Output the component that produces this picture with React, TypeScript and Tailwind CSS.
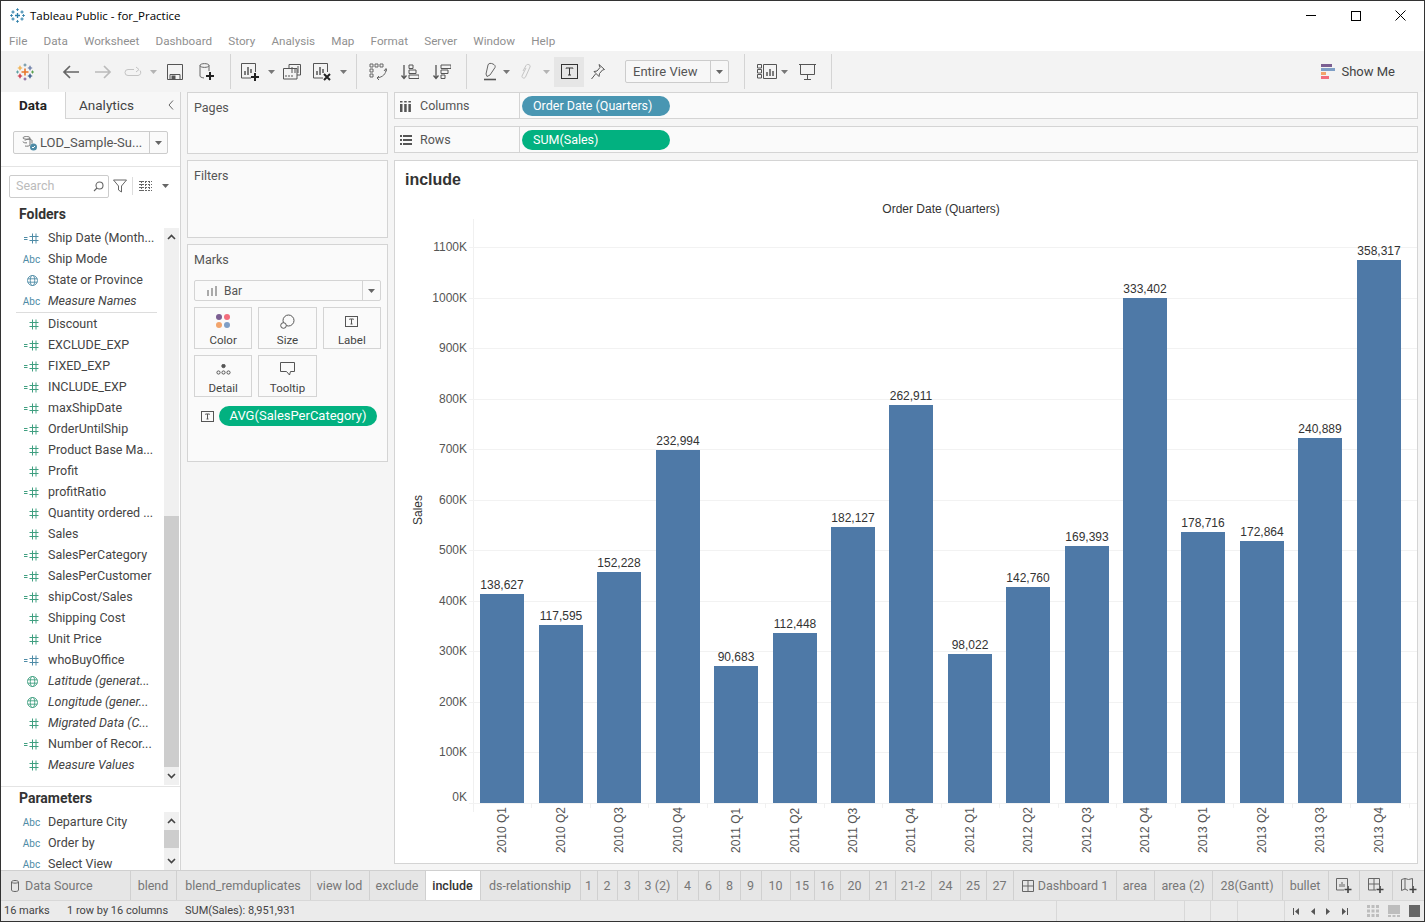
const BLUE = "#4e8ba6";
const GREEN = "#3f9f80";

type FieldKind = "calc" | "num" | "abc" | "globe";
interface Field {
  name: string;
  kind: FieldKind;
  color?: string;
  italic?: boolean;
}

const fieldsTop: Field[] = [
  { name: "Ship Date (Month...", kind: "calc", color: BLUE },
  { name: "Ship Mode", kind: "abc" },
  { name: "State or Province", kind: "globe", color: BLUE },
  { name: "Measure Names", kind: "abc", italic: true },
];

const fieldsBottom: Field[] = [
  { name: "Discount", kind: "num" },
  { name: "EXCLUDE_EXP", kind: "calc" },
  { name: "FIXED_EXP", kind: "calc" },
  { name: "INCLUDE_EXP", kind: "calc" },
  { name: "maxShipDate", kind: "calc" },
  { name: "OrderUntilShip", kind: "calc" },
  { name: "Product Base Ma...", kind: "num" },
  { name: "Profit", kind: "num" },
  { name: "profitRatio", kind: "calc" },
  { name: "Quantity ordered ...", kind: "num" },
  { name: "Sales", kind: "num" },
  { name: "SalesPerCategory", kind: "calc" },
  { name: "SalesPerCustomer", kind: "calc" },
  { name: "shipCost/Sales", kind: "calc" },
  { name: "Shipping Cost", kind: "num" },
  { name: "Unit Price", kind: "num" },
  { name: "whoBuyOffice", kind: "calc", color: BLUE },
  { name: "Latitude (generat...", kind: "globe", italic: true },
  { name: "Longitude (gener...", kind: "globe", italic: true },
  { name: "Migrated Data (C...", kind: "num", italic: true },
  { name: "Number of Recor...", kind: "calc" },
  { name: "Measure Values", kind: "num", italic: true },
];

const params: Field[] = [
  { name: "Departure City", kind: "abc" },
  { name: "Order by", kind: "abc" },
  { name: "Select View", kind: "abc" },
];

const bars = [
  { q: "2010 Q1", v: "138,627", x: 480, top: 594 },
  { q: "2010 Q2", v: "117,595", x: 539, top: 625 },
  { q: "2010 Q3", v: "152,228", x: 597, top: 572 },
  { q: "2010 Q4", v: "232,994", x: 656, top: 450 },
  { q: "2011 Q1", v: "90,683", x: 714, top: 666 },
  { q: "2011 Q2", v: "112,448", x: 773, top: 633 },
  { q: "2011 Q3", v: "182,127", x: 831, top: 527 },
  { q: "2011 Q4", v: "262,911", x: 889, top: 405 },
  { q: "2012 Q1", v: "98,022", x: 948, top: 654 },
  { q: "2012 Q2", v: "142,760", x: 1006, top: 587 },
  { q: "2012 Q3", v: "169,393", x: 1065, top: 546 },
  { q: "2012 Q4", v: "333,402", x: 1123, top: 298 },
  { q: "2013 Q1", v: "178,716", x: 1181, top: 532 },
  { q: "2013 Q2", v: "172,864", x: 1240, top: 541 },
  { q: "2013 Q3", v: "240,889", x: 1298, top: 438 },
  { q: "2013 Q4", v: "358,317", x: 1357, top: 260 },
];

const menus = ["File", "Data", "Worksheet", "Dashboard", "Story", "Analysis", "Map", "Format", "Server", "Window", "Help"];

const tabs = [
  { label: "blend", w: "w-[46px]" },
  { label: "blend_remduplicates", w: "w-[134px]" },
  { label: "view lod", w: "w-[59px]" },
  { label: "exclude", w: "w-[56px]" },
  { label: "include", w: "w-[55px]", active: true },
  { label: "ds-relationship", w: "w-[100px]" },
  { label: "1", w: "w-[17px]" },
  { label: "2", w: "w-[20px]" },
  { label: "3", w: "w-[21px]" },
  { label: "3 (2)", w: "w-[39px]" },
  { label: "4", w: "w-[21px]" },
  { label: "6", w: "w-[21px]" },
  { label: "8", w: "w-[21px]" },
  { label: "9", w: "w-[21px]" },
  { label: "10", w: "w-[29px]" },
  { label: "15", w: "w-[24px]" },
  { label: "16", w: "w-[26px]" },
  { label: "20", w: "w-[29px]" },
  { label: "21", w: "w-[26px]" },
  { label: "21-2", w: "w-[36px]" },
  { label: "24", w: "w-[29px]" },
  { label: "25", w: "w-[26px]" },
  { label: "27", w: "w-[27px]" },
];

const tabsAfter = [
  { label: "area", w: "w-[38px]" },
  { label: "area (2)", w: "w-[58px]" },
  { label: "28(Gantt)", w: "w-[70px]" },
  { label: "bullet", w: "w-[46px]" },
];

function Caret({ className = "" }: { className?: string }) {
  return (
    <div className={"w-[10px] flex justify-center shrink-0 " + className}>
      <svg width="7" height="4" viewBox="0 0 7 4">
        <path d="M0 0h7L3.5 4z" fill="#777" />
      </svg>
    </div>
  );
}

function Slot({ className = "", children }: { className?: string; children: React.ReactNode }) {
  return <div className={"w-[20px] h-[24px] shrink-0 flex items-center justify-center " + className}>{children}</div>;
}

function Sep({ className = "" }: { className?: string }) {
  return <div className={"w-px h-[35px] bg-[#d4d4d4] shrink-0 " + className} />;
}

function Cross({ x, y, r, c, w = 1.5 }: { x: number; y: number; r: number; c: string; w?: number }) {
  return <path d={`M${x - r} ${y}h${2 * r}M${x} ${y - r}v${2 * r}`} stroke={c} strokeWidth={w} fill="none" />;
}

function TableauLogo() {
  return (
    <svg width="18" height="18" viewBox="0 0 18 18">
      <Cross x={9} y={9} r={3.5} c="#e8762b" w={1.6} />
      <Cross x={4} y={5} r={2.2} c="#f0a93a" w={1.2} />
      <Cross x={14} y={5} r={2.2} c="#5b6f9e" w={1.2} />
      <Cross x={4} y={13} r={2.2} c="#c72035" w={1.2} />
      <Cross x={14} y={13} r={2.2} c="#1f457e" w={1.2} />
      <Cross x={9} y={2} r={1.5} c="#5b879b" w={1} />
      <Cross x={9} y={16} r={1.5} c="#7a4f8f" w={1} />
      <Cross x={1.5} y={9} r={1.5} c="#5fa2a5" w={1} />
      <Cross x={16.5} y={9} r={1.5} c="#59a14f" w={1} />
    </svg>
  );
}

function AppIcon() {
  return (
    <svg width="15" height="15" viewBox="0 0 15 15">
      <Cross x={7.5} y={7.5} r={2.5} c="#2d7ea8" w={1.3} />
      <Cross x={3} y={4} r={1.6} c="#2d7ea8" w={1} />
      <Cross x={12} y={4} r={1.6} c="#2d7ea8" w={1} />
      <Cross x={3} y={11} r={1.6} c="#2d7ea8" w={1} />
      <Cross x={12} y={11} r={1.6} c="#2d7ea8" w={1} />
      <Cross x={7.5} y={1.6} r={1.3} c="#2d7ea8" w={1} />
      <Cross x={7.5} y={13.4} r={1.3} c="#2d7ea8" w={1} />
      <Cross x={1.5} y={7.5} r={1.3} c="#2d7ea8" w={1} />
      <Cross x={13.5} y={7.5} r={1.3} c="#2d7ea8" w={1} />
    </svg>
  );
}

function ChartAdd() {
  return (
    <svg width="20" height="20" viewBox="0 0 20 20" fill="none">
      <path d="M11 16H1.5V1.5h14V10" stroke="#555" />
      <path d="M5 13V9M8 13V5M11 11V7" stroke="#555" strokeWidth="1.5" />
      <path d="M15 11v8M11 15h8" stroke="#222" strokeWidth="2" />
    </svg>
  );
}

function FieldIcon({ field }: { field: Field }) {
  if (field.kind === "abc") {
    return <span className="text-[10px] leading-none text-[#4e8ba6] font-['Roboto',sans-serif]">Abc</span>;
  }
  if (field.kind === "globe") {
    const c = field.color ?? GREEN;
    return (
      <svg width="11" height="11" viewBox="0 0 11 11" fill="none" stroke={c} strokeWidth="0.9" className="ml-[4px] mr-[2px]">
        <circle cx="5.5" cy="5.5" r="5" />
        <ellipse cx="5.5" cy="5.5" rx="2.2" ry="5" />
        <path d="M0.8 3.8h9.4M0.8 7.2h9.4" />
      </svg>
    );
  }
  const c = field.color ?? GREEN;
  return (
    <svg width="16" height="11" viewBox="0 0 16 11" fill="none" stroke={c} strokeWidth="1">
      {field.kind === "calc" && <path d="M0 4.5h3.5M0 6.5h3.5" />}
      <path d="M8.5 0.5v10M12 0.5v10M5.5 3.5h9M5.5 7.5h9" />
    </svg>
  );
}

function FieldRow({ field }: { field: Field }) {
  return (
    <div className="h-[21px] flex items-center shrink-0">
      <div className="w-[47px] pl-[20px] pr-[6px] flex items-center justify-center shrink-0">
        <FieldIcon field={field} />
      </div>
      <span className={"whitespace-nowrap text-[#444] " + (field.italic ? "italic" : "")}>{field.name}</span>
    </div>
  );
}

function ScrollArrow({ up }: { up?: boolean }) {
  return (
    <div className="h-[18px] flex items-center justify-center shrink-0">
      <svg width="9" height="6" viewBox="0 0 9 6" fill="none" stroke="#444" strokeWidth="1.6">
        <path d={up ? "M1 5l3.5-3.5L8 5" : "M1 1l3.5 3.5L8 1"} />
      </svg>
    </div>
  );
}

function MarkButton({ label, children }: { label: string; children: React.ReactNode }) {
  return (
    <div className="h-[42px] border border-[#d4d4d4] flex flex-col items-center justify-end">
      <div className="h-[22px] flex items-center">{children}</div>
      <span className="leading-[16px] text-[11.5px] text-[#444]">{label}</span>
    </div>
  );
}

function TIcon({ w = 13, h = 11 }: { w?: number; h?: number }) {
  return (
    <svg width={w} height={h} viewBox="0 0 13 11" fill="none" stroke="#555">
      <rect x="0.5" y="0.5" width="12" height="10" />
      <path d="M4.5 3.5v-.5h4v.5M6.5 3v5M5.5 8h2" />
    </svg>
  );
}

function Tab({ label, w, active }: { label: string; w: string; active?: boolean }) {
  return (
    <div
      className={
        "h-full shrink-0 flex items-center justify-center border-r border-[#d0d0d0] whitespace-nowrap pr-px pt-px " +
        w +
        (active ? " bg-white font-medium text-[#333]" : " text-[#777]")
      }
    >
      {label}
    </div>
  );
}

function Shelf({ icon, label, pill, color, className = "" }: { icon: React.ReactNode; label: string; pill: string; color: string; className?: string }) {
  return (
    <div className={"h-[27px] bg-[#fafafa] border border-[#d4d4d4] flex items-stretch shrink-0 " + className}>
      <div className="w-[125px] border-r border-[#d4d4d4] flex items-center pl-[5px] pt-px text-[#555] shrink-0">
        <div className="w-[20px] flex items-center">{icon}</div>
        <span>{label}</span>
      </div>
      <div className={"w-[148px] h-[20px] ml-[2px] mt-[3px] rounded-full text-white pl-[11px] flex items-center " + color}>{pill}</div>
    </div>
  );
}

export default function App() {
  const ticks = Array.from({ length: 12 }, (_, i) => i);

  return (
    <div className="w-[1425px] h-[922px] border border-[#333] bg-[#f5f5f5] flex flex-col overflow-hidden font-['Roboto',sans-serif] text-[12.5px] text-[#555]">
      {/* Title bar */}
      <div className="h-[29px] bg-white flex items-center shrink-0">
        <div className="w-[29px] pl-[9px] flex items-center"><AppIcon /></div>
        <span className="text-[11.5px] text-black font-['Open_Sans',sans-serif]">Tableau Public - for_Practice</span>
        <div className="ml-auto mr-px flex">
          <div className="w-[45px] h-[29px] flex items-center justify-center">
            <div className="w-[10px] h-px bg-black" />
          </div>
          <div className="w-[45px] h-[29px] flex items-center justify-center">
            <div className="w-[10px] h-[10px] border border-black" />
          </div>
          <div className="w-[45px] h-[29px] flex items-center justify-center">
            <svg width="11" height="11" viewBox="0 0 11 11" stroke="#000" fill="none">
              <path d="M0.5 0.5l10 10M10.5 0.5l-10 10" />
            </svg>
          </div>
        </div>
      </div>

      {/* Menu bar */}
      <div className="h-[21px] bg-white flex items-center pl-[8px] pt-[2px] gap-[16.2px] shrink-0 text-[#909090] text-[11.7px]">
        {menus.map((m) => (
          <span key={m}>{m}</span>
        ))}
      </div>

      {/* Toolbar */}
      <div className="h-[41px] bg-[#f3f3f3] flex items-center shrink-0">
        <div className="w-[47px] flex items-center justify-center shrink-0 pl-[1px]"><TableauLogo /></div>
        <Sep />
        <Slot className="ml-[12px]">
          <svg width="18" height="14" viewBox="0 0 18 14" fill="none" stroke="#666" strokeWidth="1.7"><path d="M17 7H2M8 1L2 7l6 6" /></svg>
        </Slot>
        <Slot className="ml-[12px]">
          <svg width="18" height="14" viewBox="0 0 18 14" fill="none" stroke="#bbb" strokeWidth="1.7"><path d="M1 7h15M10 1l6 6-6 6" /></svg>
        </Slot>
        <Slot className="ml-[10px]">
          <svg width="18" height="12" viewBox="0 0 18 12" fill="none" stroke="#c4c4c4" strokeWidth="1"><path d="M10 3.5H4a3 3 0 000 6h10a3 3 0 002-5M12 1l3 2.5L12 6" /></svg>
        </Slot>
        <Caret className="ml-[5px] opacity-50" />
        <Slot className="ml-[7px]">
          <svg width="16" height="16" viewBox="0 0 16 16" fill="none" stroke="#555"><path d="M0.5 0.5h15v15H0.5zM3 15.5v-5h10v5" /><rect x="5" y="12" width="3" height="3" fill="#555" /></svg>
        </Slot>
        <Slot className="ml-[12px]">
          <svg width="16" height="20" viewBox="0 0 16 20" fill="none"><path d="M1 3.5C1 1 10 1 10 3.5V9M1 3.5V14c0 1 1.500 1.500 4 2M1 3.500c0 2.500 9 2.500 9 0" stroke="#666" /><path d="M11 10v8M7 14h8" stroke="#222" strokeWidth="2" /></svg>
        </Slot>
        <Sep className="ml-[13px]" />
        <Slot className="ml-[9px]"><ChartAdd /></Slot>
        <Caret className="ml-[6px]" />
        <Slot className="ml-[6px]">
          <svg width="18" height="16" viewBox="0 0 18 16" fill="none" stroke="#555"><path d="M6 4V0.500h11.500V11H14M0.500 4.500H14V15H0.500zM9 9V3M12 9V5M15 9V2" /><path d="M3 13V11M6 13V11M9 13V11" /></svg>
        </Slot>
        <Slot className="ml-[10px]">
          <svg width="20" height="20" viewBox="0 0 20 20" fill="none"><path d="M11 16H1.500V1.500h14V10" stroke="#555" /><path d="M5 13V9M8 13V5M11 11V7" stroke="#555" strokeWidth="1.500" /><path d="M12 12l6 6M18 12l-6 6" stroke="#222" strokeWidth="2" /></svg>
        </Slot>
        <Caret className="ml-[6px]" />
        <Sep className="ml-[8px]" />
        <Slot className="ml-[11px]">
          <svg width="18" height="18" viewBox="0 0 18 18" fill="none" stroke="#666"><path d="M1 1h3v3H1zM6 1h3v3H6zM11 1h3v3h-3zM1 6h3v3H1zM1 11h3v3H1z" /><path d="M17 6c0 5-3 8-9 9M10 13l-2 2 2 2M15 8l2-2.500 1 3" /></svg>
        </Slot>
        <Slot className="ml-[12px]">
          <svg width="18" height="16" viewBox="0 0 18 16" fill="none" stroke="#555"><path d="M3 1v13M0.500 11.500L3 14.500l2.500-3" strokeWidth="1.300" /><path d="M8 1h4v3.500H8zM8 6h7v3.500H8zM8 11h10v3.500H8z" /></svg>
        </Slot>
        <Slot className="ml-[12px]">
          <svg width="18" height="16" viewBox="0 0 18 16" fill="none" stroke="#555"><path d="M3 1v13M0.500 11.500L3 14.500l2.500-3" strokeWidth="1.300" /><path d="M8 1h10v3.500H8zM8 6h7v3.500H8zM8 11h4v3.500H8z" /></svg>
        </Slot>
        <Sep className="ml-[14px]" />
        <Slot className="ml-[13px]">
          <svg width="14" height="19" viewBox="0 0 14 19" fill="none"><path d="M3 12L5 3c.5-2 3-2 5-1s2.500 2 2 3.500L7 13l-3 1.500z" stroke="#666" /><path d="M1 17.500h12" stroke="#555" strokeWidth="1.600" /></svg>
        </Slot>
        <Caret className="ml-[1px]" />
        <Slot className="ml-[5px]">
          <svg width="12" height="18" viewBox="0 0 12 18" fill="none" stroke="#c4c4c4"><path d="M3 8L6 2.500c1-2 5-1 4 1.500L5.500 14c-1 2-4 1-3.500-1L6 5" /></svg>
        </Slot>
        <Caret className="ml-[5px] opacity-50" />
        <div className="w-[30px] h-[30px] ml-[3px] bg-[#e6e6e6] shrink-0 flex items-center justify-center">
          <svg width="17" height="15" viewBox="0 0 17 15" fill="none" stroke="#333"><rect x="0.500" y="0.500" width="16" height="14" /><path d="M5 4.500V4h7v.500M8.500 4v7M7 11h3" /></svg>
        </div>
        <Slot className="ml-[4px]">
          <svg width="14" height="16" viewBox="0 0 14 16" fill="none" stroke="#555"><path d="M8 0.500l5.500 5-2 .5-3 3.500-.5 3-5-5 3-.5L9 3.500zM4.500 10L0.500 15" /></svg>
        </Slot>
        <div className="w-[104px] h-[23px] ml-[17px] bg-[#f7f7f7] border border-[#ccc] rounded-[2px] flex items-stretch shrink-0 text-[13px] text-[#555]">
          <div className="flex-1 flex items-center pl-[7px] border-r border-[#ccc]">Entire View</div>
          <div className="w-[17px] flex items-center justify-center">
            <svg width="7" height="4" viewBox="0 0 7 4"><path d="M0 0h7L3.500 4z" fill="#666" /></svg>
          </div>
        </div>
        <Sep className="ml-[15px]" />
        <Slot className="ml-[12px]">
          <svg width="20" height="15" viewBox="0 0 20 15" fill="none" stroke="#555"><path d="M0.500 0.500h4v3.500h-4zM0.500 5.500h4V9h-4zM0.500 10.500h4V14h-4zM6.500 0.500h13v14h-13z" /><path d="M10 12V8M13 12V5M16 12V7" strokeWidth="1.500" /></svg>
        </Slot>
        <Caret className="ml-[2px]" />
        <Slot className="ml-[8px]">
          <svg width="17" height="16" viewBox="0 0 17 16" fill="none" stroke="#555"><path d="M0 0.500h17M1.500 0.500v10h14v-10M8.500 10.500V15M5 15.500h7" /></svg>
        </Slot>
        <Sep className="ml-[14px]" />
        <div className="ml-auto mr-[29px] flex items-center gap-[6px] text-[13px] text-[#444]">
          <div className="flex flex-col gap-px w-[14px]">
            <div className="h-[3px] w-[11px] bg-[#7b5f92]" />
            <div className="h-[3px] w-[14px] bg-[#7f9fc6]" />
            <div className="h-[3px] w-[5px] bg-[#f2a46c]" />
            <div className="h-[3px] w-[8px] bg-[#f26d7d]" />
          </div>
          <span>Show Me</span>
        </div>
      </div>

      {/* Main area */}
      <div className="h-[778px] flex shrink-0">
        {/* Data pane */}
        <div className="w-[180px] h-full bg-white border-r border-[#d4d4d4] flex flex-col shrink-0 relative">
          <div className="h-[27px] flex shrink-0 text-[13.5px]">
            <div className="w-[65px] flex items-center justify-center font-bold text-[#222] border-r border-[#d4d4d4]">Data</div>
            <div className="flex-1 flex items-center pl-[13px] border-b border-[#d4d4d4] bg-[#f7f7f7] text-[#444]">
              Analytics
              <svg width="6" height="10" viewBox="0 0 6 10" fill="none" stroke="#666" className="ml-[34px]"><path d="M5 0.500L1 5l4 4.500" /></svg>
            </div>
          </div>
          <div className="h-[48px] border-b border-[#e4e4e4] pt-[12px] pl-[12px] shrink-0">
            <div className="w-[155px] h-[23px] border border-[#ccc] rounded-[2px] flex items-stretch bg-[#fafafa]">
              <div className="flex-1 flex items-center pl-[8px] gap-[2px] border-r border-[#ccc]">
                <svg width="16" height="16" viewBox="0 0 16 16" fill="none" className="shrink-0">
                  <path d="M1 3c0-2 7-2 7 0v7c0 1-3 1.500-5 1M1 3c0 1.500 7 1.500 7 0M1 6.500c0 1.500 3 1.500 4 1.300M3 5.500c0-1.500 7-1.500 7 0v3" stroke="#777" />
                  <circle cx="11.500" cy="12" r="3.500" fill="#4e8ba6" />
                  <path d="M10 12l1 1 2-2" stroke="#fff" />
                </svg>
                <span className="whitespace-nowrap text-[13px]">LOD_Sample-Su...</span>
              </div>
              <div className="w-[17px] flex items-center justify-center">
                <svg width="7" height="4" viewBox="0 0 7 4"><path d="M0 0h7L3.500 4z" fill="#666" /></svg>
              </div>
            </div>
          </div>
          <div className="h-[37px] pt-[8px] pl-[8px] flex items-start shrink-0">
            <div className="w-[100px] h-[23px] border border-[#ccc] rounded-[2px] flex items-center justify-between pl-[6px] pr-[4px] text-[#bbb]">
              <span>Search</span>
              <svg width="11" height="11" viewBox="0 0 11 11" fill="none" stroke="#666" strokeWidth="1.100"><circle cx="6.500" cy="4.500" r="3.500" /><path d="M4 7l-3 3" /></svg>
            </div>
            <svg width="14" height="14" viewBox="0 0 14 14" fill="none" stroke="#666" className="ml-[4px] mt-[4px]"><path d="M0.500 1h13L8.500 7v6l-3-2V7z" /></svg>
            <div className="w-px h-[18px] bg-[#ddd] ml-[5px] mt-[2px]" />
            <svg width="13" height="10" viewBox="0 0 13 10" fill="none" stroke="#666" className="ml-[6px] mt-[6px]"><path d="M0 0.500h13M0 3.500h13M0 6.500h13M0 9.500h13M2.500 0v10M6.500 0v10M10.500 0v10" strokeDasharray="2 1" /></svg>
            <svg width="7" height="4" viewBox="0 0 7 4" className="ml-[10px] mt-[9px]"><path d="M0 0h7L3.500 4z" fill="#666" /></svg>
          </div>
          <div className="h-[21px] pl-[18px] flex items-center font-bold text-[14px] text-[#333] shrink-0">Folders</div>
          <div className="h-[562px] border-b border-[#e4e4e4] flex shrink-0 pt-[3px]">
            <div className="w-[163px] flex flex-col shrink-0 overflow-hidden">
              {fieldsTop.map((f) => (
                <FieldRow key={f.name} field={f} />
              ))}
              <div className="h-px w-[141px] ml-[15px] mb-px bg-[#ddd] shrink-0" />
              {fieldsBottom.map((f) => (
                <FieldRow key={f.name} field={f} />
              ))}
            </div>
            <div className="w-[15px] bg-[#f0f0f0] flex flex-col shrink-0 mb-px">
              <ScrollArrow up />
              <div className="h-[270px] shrink-0" />
              <div className="flex-1 bg-[#cdcdcd]" />
              <ScrollArrow />
            </div>
          </div>
          <div className="h-[25px] pl-[18px] pb-[2px] flex items-center font-bold text-[14px] text-[#333] shrink-0">Parameters</div>
          <div className="flex-1 flex min-h-0">
            <div className="w-[163px] flex flex-col overflow-hidden shrink-0">
              {params.map((f) => (
                <FieldRow key={f.name} field={f} />
              ))}
            </div>
            <div className="w-[15px] bg-[#f0f0f0] flex flex-col shrink-0">
              <ScrollArrow up />
              <div className="h-[18px] bg-[#cdcdcd] shrink-0" />
              <div className="flex-1" />
              <ScrollArrow />
            </div>
          </div>
        </div>

        {/* Cards column */}
        <div className="w-[201px] ml-[6px] flex flex-col gap-[6px] shrink-0">
          <div className="h-[62px] bg-[#fafafa] border border-[#d4d4d4] pl-[6px] pt-[6px] shrink-0">Pages</div>
          <div className="h-[78px] bg-[#fafafa] border border-[#d4d4d4] pl-[6px] pt-[6px] shrink-0">Filters</div>
          <div className="h-[218px] bg-[#fafafa] border border-[#d4d4d4] pl-[6px] pr-[6px] pt-[6px] shrink-0">
            <div className="h-[29px]">Marks</div>
            <div className="h-[21px] border border-[#d4d4d4] rounded-[2px] flex items-stretch">
              <div className="flex-1 flex items-center pl-[12px] gap-[6px] border-r border-[#d4d4d4] text-[12px]">
                <svg width="11" height="10" viewBox="0 0 11 10" fill="#aaa"><path d="M0 4h2v6H0zM4 2h2v8H4zM8 0h2v10H8z" /></svg>
                <span>Bar</span>
              </div>
              <div className="w-[17px] flex items-center justify-center">
                <svg width="7" height="4" viewBox="0 0 7 4"><path d="M0 0h7L3.500 4z" fill="#666" /></svg>
              </div>
            </div>
            <div className="grid grid-cols-3 gap-[6px] mt-[6px]">
              <MarkButton label="Color">
                <svg width="16" height="16" viewBox="0 0 16 16">
                  <circle cx="4" cy="4" r="3" fill="#7b5f92" />
                  <circle cx="12" cy="4" r="3" fill="#f26d7d" />
                  <circle cx="4" cy="12" r="3" fill="#f2a46c" />
                  <circle cx="12" cy="12" r="3" fill="#7f9fc6" />
                </svg>
              </MarkButton>
              <MarkButton label="Size">
                <svg width="15" height="15" viewBox="0 0 15 15" fill="none" stroke="#555"><circle cx="8.500" cy="6.500" r="5.500" /><circle cx="3.500" cy="11.500" r="2.800" fill="#fafafa" /></svg>
              </MarkButton>
              <MarkButton label="Label"><TIcon /></MarkButton>
              <MarkButton label="Detail">
                <svg width="15" height="11" viewBox="0 0 15 11" fill="none" stroke="#555"><circle cx="7.500" cy="2" r="1.700" fill="#555" /><circle cx="2.500" cy="8.500" r="1.600" /><circle cx="7.500" cy="8.500" r="1.600" /><circle cx="12.500" cy="8.500" r="1.600" /></svg>
              </MarkButton>
              <MarkButton label="Tooltip">
                <svg width="15" height="14" viewBox="0 0 15 14" fill="none" stroke="#555"><path d="M0.500 0.500h14v9h-4l-1 3.500-3-3.500h-6z" /></svg>
              </MarkButton>
            </div>
            <div className="flex items-center mt-[9px] pl-[7px]">
              <TIcon />
              <div className="w-[158px] h-[20px] ml-[5px] rounded-full bg-[#02b180] text-white flex items-center justify-center text-[13px]">AVG(SalesPerCategory)</div>
            </div>
          </div>
        </div>

        {/* Shelves and view */}
        <div className="w-[1024px] ml-[6px] flex flex-col shrink-0">
          <Shelf
            label="Columns"
            pill="Order Date (Quarters)"
            color="bg-[#4996b2]"
            icon={
              <svg width="11" height="11" viewBox="0 0 11 11" fill="#555"><path d="M0 3h2.500v8H0zM4.200 3h2.500v8H4.200zM8.400 3h2.500v8H8.400zM0 0h2.500v1.500H0zM4.200 0h2.500v1.500H4.200zM8.400 0h2.500v1.500H8.400z" /></svg>
            }
          />
          <Shelf
            className="mt-[7px]"
            label="Rows"
            pill="SUM(Sales)"
            color="bg-[#02b180]"
            icon={
              <svg width="12" height="10" viewBox="0 0 12 10" fill="#555"><path d="M3 0h9v2H3zM3 4h9v2H3zM3 8h9v2H3zM0 0h2v2H0zM0 4h2v2H0zM0 8h2v2H0z" /></svg>
            }
          />
          <div className="h-[704px] mt-[7px] bg-white border border-[#d4d4d4] flex flex-col shrink-0">
            <div className="h-[37px] pl-[10px] pt-[9px] text-[16px] leading-[20px] font-bold text-[#333] font-['Liberation_Sans',sans-serif] shrink-0">include</div>
            <svg width="1022" height="665" viewBox="395 198 1022 665" className="block font-['Liberation_Sans',sans-serif]">
              <text x="941" y="213" textAnchor="middle" fontSize="12" fill="#333">Order Date (Quarters)</text>
              <text transform="translate(422 510) rotate(-90)" textAnchor="middle" fontSize="12" fill="#333">Sales</text>
              <path d="M473.500 219V812" stroke="#f0f0f0" />
              {ticks.map((i) => {
                const y = Math.round(803 - i * 50.55) + 0.5;
                return (
                  <g key={i}>
                    <path d={`M469 ${y}H1417`} stroke="#f2f2f2" />
                    <text x="467" y={i === 0 ? y - 3 : y + 3} textAnchor="end" fontSize="12" fill="#555">{`${i * 100}K`}</text>
                  </g>
                );
              })}
              {bars.map((b, i) => (
                <g key={b.q}>
                  <path d={`M${Math.round(473 + (i + 1) * 58.47) + 0.5} 803V808`} stroke="#f0f0f0" />
                  <rect x={b.x} y={b.top} width="44" height={803 - b.top} fill="#4e79a7" />
                  <text x={b.x + 22} y={b.top - 5} textAnchor="middle" fontSize="12" fill="#333">{b.v}</text>
                  <text transform={`translate(${b.x + 25.5} 853) rotate(-90)`} fontSize="12" fill="#555">{b.q}</text>
                </g>
              ))}
            </svg>
          </div>
        </div>
      </div>

      {/* Sheet tabs */}
      <div className="h-[30px] bg-[#e6e6e6] border-t border-[#d0d0d0] flex items-stretch shrink-0 text-[12.5px]">
        <div className="w-[130px] flex items-center pl-[10px] pt-px gap-[6px] border-r border-[#d0d0d0] text-[#777] shrink-0">
          <svg width="8" height="12" viewBox="0 0 8 12" fill="none" stroke="#666"><path d="M0.500 2c0-2 7-2 7 0v8c0 2-7 2-7 0zM0.500 2c0 1.500 7 1.500 7 0" /></svg>
          Data Source
        </div>
        {tabs.map((t) => (
          <Tab key={t.label} {...t} />
        ))}
        <div className="w-[103px] shrink-0 flex items-center justify-center gap-[4px] pt-px border-r border-[#d0d0d0] text-[#777]">
          <svg width="12" height="12" viewBox="0 0 12 12" fill="none" stroke="#666"><path d="M0.500 0.500h11v11H0.500zM6 0.500v11M0.500 6h11" /></svg>
          Dashboard 1
        </div>
        {tabsAfter.map((t) => (
          <Tab key={t.label} {...t} />
        ))}
        <div className="w-[31px] shrink-0 flex items-center justify-center border-r border-[#d0d0d0]">
          <svg width="16" height="16" viewBox="0 0 16 16" fill="none" stroke="#666"><path d="M8 12H0.500V0.500h11V8M4 9V6M6 9V4M8 9V6" /><path d="M12 8v7M8.500 11.500h7" stroke="#444" strokeWidth="1.600" /></svg>
        </div>
        <div className="w-[33px] shrink-0 flex items-center justify-center border-r border-[#d0d0d0]">
          <svg width="16" height="16" viewBox="0 0 16 16" fill="none" stroke="#666"><path d="M8 12H0.500V0.500h11V8M6 0.500V12M0.500 6h11" /><path d="M12 8v7M8.500 11.500h7" stroke="#444" strokeWidth="1.600" /></svg>
        </div>
        <div className="w-[32px] shrink-0 flex items-center justify-center">
          <svg width="16" height="16" viewBox="0 0 16 16" fill="none" stroke="#666"><path d="M7 12.500L4 11 0.500 12.500V1.500L4 0.500l3.500 1 4-1V8M4 0.500V11" /><path d="M12 8v7M8.500 11.500h7" stroke="#444" strokeWidth="1.600" /></svg>
        </div>
      </div>

      {/* Status bar */}
      <div className="flex-1 bg-[#ebebeb] border-t border-[#d8d8d8] flex items-stretch text-[11px] text-[#444]">
        <div className="w-[1056px] border-r border-[#d8d8d8] flex items-center pl-[3px] shrink-0 whitespace-nowrap">
          <span className="w-[63px]">16 marks</span>
          <span className="w-[118px]">1 row by 16 columns</span>
          <span>SUM(Sales): 8,951,931</span>
        </div>
        <div className="w-[128px] border-r border-[#d8d8d8] shrink-0" />
        <div className="w-[26px] border-r border-[#d8d8d8] shrink-0" />
        <div className="w-[27px] border-r border-[#d8d8d8] shrink-0" />
        <div className="w-[47px] border-r border-[#d8d8d8] shrink-0" />
        <div className="flex items-center pl-[8px] gap-[11px]">
          <svg width="6" height="7" viewBox="0 0 6 7" fill="#555"><path d="M0 0h1v7H0zM6 0v7L2 3.500z" /></svg>
          <svg width="5" height="7" viewBox="0 0 5 7" fill="#555"><path d="M5 0v7L1 3.500z" /></svg>
          <svg width="5" height="7" viewBox="0 0 5 7" fill="#555"><path d="M0 0v7l4-3.500z" /></svg>
          <svg width="6" height="7" viewBox="0 0 6 7" fill="#555"><path d="M5 0h1v7H5zM0 0v7l4-3.500z" /></svg>
          <svg width="12" height="12" viewBox="0 0 12 12" fill="#bdbdbd" className="ml-[8px]"><path d="M0 0h3v3H0zM4.500 0h3v3h-3zM9 0h3v3H9zM0 4.500h3v3H0zM4.500 4.500h3v3h-3zM9 4.500h3v3H9zM0 9h3v3H0zM4.500 9h3v3h-3zM9 9h3v3H9z" /></svg>
          <svg width="12" height="12" viewBox="0 0 12 12" fill="#bdbdbd" className="ml-[-2px]"><path d="M0 0h12v9H0zM0 10h3v2H0zM4.500 10h3v2h-3zM9 10h3v2H9z" /></svg>
          <div className="w-[11px] h-[12px] bg-[#666] ml-[-2px]" />
        </div>
      </div>
    </div>
  );
}
